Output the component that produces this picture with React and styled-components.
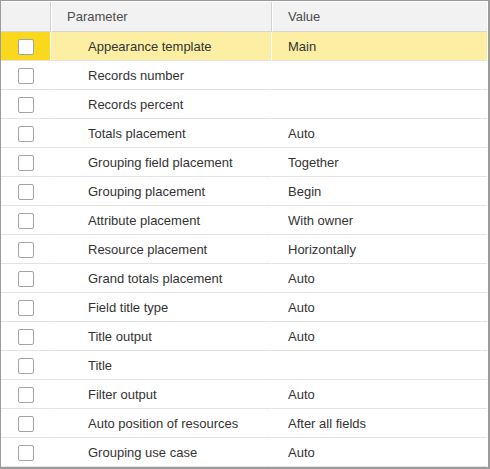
import React from "react";
import styled, { createGlobalStyle } from "styled-components";

const Global = createGlobalStyle`
  html, body { margin: 0; padding: 0; background: #fff; }
  body { font-family: "Liberation Sans", Arial, sans-serif; }
`;

const Frame = styled.div`
  box-sizing: border-box;
  width: 490px;
  height: 469px;
  border-style: solid;
  border-color: #9b9b9b;
  border-width: 1px 2px 2px 1px;
  padding: 1px 1px 0 0;
  background: #fff;
  overflow: hidden;
`;

const Grid = styled.div`
  display: grid;
  grid-template-columns: 50px 221px 1fr;
`;

const HeadCell = styled.div`
  box-sizing: border-box;
  height: 30px;
  background: #f2f2f2;
  border-bottom: 1px solid #d6d6d6;
  border-right: ${(p) => (p.$last ? "none" : "1px solid #d2d2d2")};
  border-left: ${(p) => (p.$first ? "none" : "1px solid #ffffff")};
  display: flex;
  align-items: center;
  padding-left: ${(p) => (p.$first ? 0 : 15)}px;
  font-size: 13px;
  color: #4d4d4d;
`;

const Cell = styled.div`
  box-sizing: border-box;
  height: 29px;
  border-bottom: 1px solid #e3e3e3;
  border-right: ${(p) => (p.$last ? "none" : "1px solid #ffffff")};
  background: ${(p) =>
    p.$selected ? (p.$check ? "#fad81e" : "#fcefa4") : "#ffffff"};
  display: flex;
  align-items: center;
  justify-content: ${(p) => (p.$check ? "center" : "flex-start")};
  padding-left: ${(p) => p.$indent || 0}px;
  font-size: 13px;
  color: #333333;
  white-space: nowrap;
`;

const Box = styled.span`
  box-sizing: border-box;
  width: 16px;
  height: 16px;
  border: 1px solid #a3a3a3;
  border-radius: 2px;
  background: #fff;
  margin-left: 1px;
  margin-top: 1px;
`;

const rows = [
  ["Appearance template", "Main"],
  ["Records number", ""],
  ["Records percent", ""],
  ["Totals placement", "Auto"],
  ["Grouping field placement", "Together"],
  ["Grouping placement", "Begin"],
  ["Attribute placement", "With owner"],
  ["Resource placement", "Horizontally"],
  ["Grand totals placement", "Auto"],
  ["Field title type", "Auto"],
  ["Title output", "Auto"],
  ["Title", ""],
  ["Filter output", "Auto"],
  ["Auto position of resources", "After all fields"],
  ["Grouping use case", "Auto"],
];

export default function App() {
  return (
    <>
      <Global />
      <Frame>
        <Grid>
          <HeadCell $first />
          <HeadCell>Parameter</HeadCell>
          <HeadCell $last>Value</HeadCell>
          {rows.map(([p, v], i) => (
            <React.Fragment key={p}>
              <Cell $check $selected={i === 0}>
                <Box />
              </Cell>
              <Cell $selected={i === 0} $indent={37}>
                {p}
              </Cell>
              <Cell $selected={i === 0} $indent={16} $last>
                {v}
              </Cell>
            </React.Fragment>
          ))}
        </Grid>
      </Frame>
    </>
  );
}
